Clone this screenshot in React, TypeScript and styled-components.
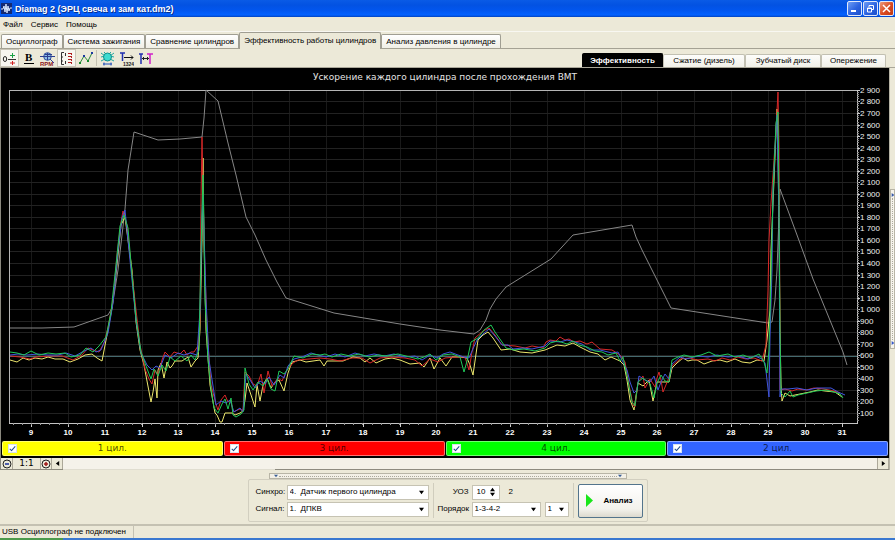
import React, { useState } from "react";
import styled, { createGlobalStyle, css } from "styled-components";

const ui = '"Liberation Sans", Arial, sans-serif';
const wide = '"DejaVu Sans", Verdana, sans-serif';
const face = "#ece9d8";

const GlobalStyle = createGlobalStyle`
  *, *::before, *::after { box-sizing: border-box; }
  body { margin: 0; background: ${face}; font: 8px/12px ${ui}; color: #000; }
  button, input, select { font: inherit; color: inherit; margin: 0; padding: 0; border-radius: 0; }
  svg { display: block; }
`;

const Window = styled.div`
  display: flex;
  flex-direction: column;
  min-height: 100vh;
  background: ${face};
`;

const TitleBar = styled.header`
  display: flex;
  align-items: center;
  gap: 3px;
  height: 17px;
  padding: 0 1px;
  background: linear-gradient(#0a5be6 0%, #0352e2 30%, #0256ee 60%, #0462ff 88%, #0243c0 100%);
`;

const Title = styled.h1`
  flex: 1;
  margin: 0;
  color: #fff;
  font: bold 9px/16px "Liberation Sans", Arial, sans-serif;
  text-shadow: 1px 1px 0 #0a2f8c;
`;

const CaptionButton = styled.button<{ $close?: boolean }>`
  display: grid;
  place-items: center;
  width: 15px;
  height: 15px;
  margin-left: -2px;
  border: 1px solid #dfe8fb;
  border-radius: 2px;
  background: ${(p) => (p.$close ? "linear-gradient(135deg,#ec9a7c,#d9481f 55%,#bf3a14)" : "linear-gradient(135deg,#6d9df5,#2b62e0 55%,#1c4fcb)")};
`;

const CaptionButtons = styled.div`
  display: flex;
  gap: 3px;
`;

const MenuBar = styled.nav`
  display: flex;
  gap: 8px;
  height: 15px;
  padding: 1px 3px 0;
  border-bottom: 1px solid #f8f7f1;
`;

const MenuItem = styled.button`
  border: 0;
  background: none;
  line-height: 13px;
`;

const TabRow = styled.div`
  display: flex;
  align-items: flex-end;
  height: 17px;
  padding-left: 1px;
  border-bottom: 1px solid #a5a294;
`;

const Tab = styled.button<{ $active?: boolean }>`
  height: 14px;
  padding: 0 4px;
  border: 1px solid #a09e92;
  border-bottom: 0;
  border-radius: 2px 2px 0 0;
  background: linear-gradient(#fff, #f0efe6);
  line-height: 13px;
  white-space: nowrap;
  ${(p) =>
    p.$active &&
    css`
      height: 17px;
      margin-bottom: -1px;
      padding-bottom: 1px;
      background: ${face};
    `}
`;

const Toolbar = styled.div`
  display: flex;
  align-items: stretch;
  height: 19px;
  border-bottom: 1px solid #aaa799;
`;

const ToolButton = styled.button<{ $pressed?: boolean }>`
  display: grid;
  place-items: center;
  width: 19px;
  border: 1px solid ${(p) => (p.$pressed ? "#c9c6b8" : "transparent")};
  background: ${(p) => (p.$pressed ? "#f7f6f0" : "none")};
`;

const Divider = styled.span`
  width: 1px;
  margin: 1px;
  background: #c5c2b2;
`;

const SubTabs = styled.div`
  display: flex;
  align-items: flex-end;
  margin-left: auto;
  padding-right: 9px;
`;

const SubTab = styled.button<{ $active?: boolean; $width: number }>`
  width: ${(p) => p.$width}px;
  height: ${(p) => (p.$active ? 14 : 13)}px;
  border: 1px solid ${(p) => (p.$active ? "#000" : "#c2c0b2")};
  border-bottom: 0;
  border-radius: 2px 2px 0 0;
  background: ${(p) => (p.$active ? "#000" : "linear-gradient(#fdfdfb,#f1f0e8)")};
  color: ${(p) => (p.$active ? "#fff" : "#000")};
  font-weight: ${(p) => (p.$active ? "bold" : "normal")};
  line-height: 12px;
  white-space: nowrap;
`;

const Workspace = styled.main`
  display: flex;
  border-left: 1px solid #8a887e;
`;

const ChartColumn = styled.section`
  flex: 1;
  min-width: 0;
  background: #000;
`;

const ChartTitle = styled.h2`
  margin: 0;
  padding-top: 3px;
  height: 18px;
  color: #e4e4e4;
  font: 9px/12px ${wide};
  text-align: center;
`;

const Plot = styled.svg`
  width: 100%;
  height: auto;
`;

const Legend = styled.div`
  display: grid;
  grid-template-columns: repeat(4, 1fr);
  gap: 1px;
  padding: 1px 1px 2px;
`;

const LegendItem = styled.label<{ $color: string }>`
  display: flex;
  align-items: center;
  height: 15px;
  padding: 0 14px 0 5px;
  border: 1px solid #ffffff70;
  border-radius: 2px;
  background: ${(p) => p.$color};
  color: #000000b8;
  font: 9px/13px ${wide};
`;

const LegendText = styled.span`
  flex: 1;
  text-align: center;
`;

const Check = styled.input`
  display: grid;
  place-items: center;
  width: 9px;
  height: 9px;
  appearance: none;
  border: 1px solid #d7e2ee;
  background: #fff;
  &:checked::before {
    content: "";
    width: 3px;
    height: 6px;
    margin-top: -2px;
    border: solid #1c4a8c;
    border-width: 0 1px 1px 0;
    transform: rotate(42deg);
  }
`;

const ScrollRow = styled.div`
  display: flex;
  height: 12px;
  background: #f4f1e8;
  border-bottom: 1px solid #8e8b7f;
`;

const ScrollButton = styled.button<{ $width: number }>`
  display: grid;
  place-items: center;
  width: ${(p) => p.$width}px;
  border: 0;
  border-right: 1px solid #aca899;
  background: ${face};
  font: 9px/11px ${wide};
`;

const Track = styled.div`
  flex: 1;
  border-right: 1px solid #aca899;
`;

const Thumb = styled.div`
  width: 26%;
  height: 12px;
  background: #f5f2ea;
  border-bottom: 1px solid #e0ddd0;
`;

const SideStrip = styled.aside`
  display: flex;
  align-items: center;
  width: 6px;
  border-left: 1px solid #b5b2a4;
`;

const SideHandle = styled.button`
  display: flex;
  flex-direction: column;
  justify-content: space-between;
  align-items: center;
  width: 5px;
  height: 40%;
  padding: 3px 0;
  border: 1px solid #b8b5a6;
  background: #f6f4ec;
`;

const BottomSplit = styled.button`
  display: flex;
  align-items: center;
  justify-content: space-between;
  align-self: center;
  width: 40%;
  height: 6px;
  margin-top: 3px;
  padding: 0 4px;
  border: 1px solid #b8b5a6;
  background: #f3f0e6;
`;

const Dots = styled.span<{ $vertical?: boolean }>`
  flex: 1;
  margin: 1px;
  ${(p) => (p.$vertical ? "border-left" : "border-top")}: 1px dotted #aaa89c;
`;

const Controls = styled.form`
  display: flex;
  align-self: center;
  align-items: center;
  height: 43px;
  padding: 0 4px 0 7px;
  border: 1px solid #d2cfc0;
  border-radius: 2px;
`;

const FieldGrid = styled.div<{ $second?: boolean }>`
  display: grid;
  grid-template-columns: ${(p) => (p.$second ? "31px auto" : "28px 142px")};
  column-gap: 3px;
  row-gap: 2px;
  align-items: center;
`;

const FieldLabel = styled.label`
  text-align: right;
  white-space: nowrap;
`;

const FieldRow = styled.div`
  display: flex;
  align-items: center;
  gap: 4px;
`;

const Field = styled.div<{ $width?: number }>`
  display: flex;
  align-items: center;
  width: ${(p) => (p.$width ? `${p.$width}px` : "100%")};
  height: 15px;
  padding-right: 4px;
  border: 1px solid #c6c3b3;
  background: #fff;
`;

const Select = styled.select`
  flex: 1;
  min-width: 0;
  height: 13px;
  padding-left: 2px;
  appearance: none;
  border: 0;
  background: none;
`;

const NumberInput = styled.input`
  flex: 1;
  min-width: 0;
  padding-left: 4px;
  border: 0;
  background: none;
  appearance: textfield;
  &::-webkit-inner-spin-button { appearance: none; }
`;

const Separator = styled.span`
  width: 1px;
  height: 35px;
  margin: 0 4px;
  background: #d0cdbd;
`;

const Extra = styled.span`
  margin-left: 5px;
`;

const AnalyseButton = styled.button`
  display: flex;
  align-items: center;
  gap: 11px;
  width: 65px;
  height: 34px;
  padding-left: 7px;
  border: 1px solid #53748c;
  border-radius: 2px;
  background: linear-gradient(#fff, #f3f2ec 75%, #dcd9ce);
  font-weight: bold;
`;

const StatusBar = styled.footer`
  display: flex;
  align-items: center;
  flex: 1;
  min-height: 14px;
  margin-top: 2px;
  border-top: 2px solid #c4c1b2;
`;

const StatusCell = styled.span`
  min-width: 134px;
  padding: 0 2px;
  border-right: 1px solid #c4c1b2;
`;

const Desktop = styled.div`
  height: 2px;
  background: linear-gradient(90deg, #4c9a4c 0 7%, #3a78d0 7%);
`;

const Arrow = ({ up, left, right, color = "#000", size = 5 }: { up?: boolean; left?: boolean; right?: boolean; color?: string; size?: number }) => (
  <svg width={size} height={size} viewBox="0 0 6 6" aria-hidden="true">
    <path d={up ? "M0 5L3 1L6 5Z" : left ? "M5 0L1 3L5 6Z" : right ? "M1 0L5 3L1 6Z" : "M0 1L6 1L3 5Z"} fill={color} />
  </svg>
);

const AppIcon = () => (
  <svg width="11" height="11" viewBox="0 0 11 11" aria-hidden="true">
    <rect width="11" height="11" fill="#142a72" />
    <path d="M0 6H2L3 3L4 9L5 1L6 10L7 3L8 8L9 5H11" stroke="#d9e8ff" fill="none" />
  </svg>
);

const icons: Record<string, React.ReactNode> = {
  zero: (
    <>
      <ellipse cx="3" cy="8" rx="1.700" ry="2.500" stroke="#222" fill="none" />
      <path d="M6 8.500H14" stroke="#333" />
      <path d="M10.500 2V7M8 4.500H13" stroke="#19a045" />
      <path d="M10.500 10V14M8 12H13" stroke="#d02020" />
    </>
  ),
  bold: (
    <>
      <text x="4" y="10" fontFamily="Liberation Serif, serif" fontWeight="bold" fontSize="11" fill="#000">В</text>
      <path d="M3 12.500H13" stroke="#000" />
    </>
  ),
  rpm: (
    <>
      <circle cx="7.500" cy="5.500" r="3.800" fill="#8fc0e8" stroke="#30509c" />
      <path d="M0 5.500H15M5 3.500H12M7.500 2V9M10 8L14 12" stroke="#2c3f90" />
      <text x="0" y="14.500" fontFamily="Liberation Sans, sans-serif" fontWeight="bold" fontSize="6" fill="#8c1818">RPM</text>
    </>
  ),
  scale: (
    <>
      <path d="M5 1.500H2.500V13.500H5M2.500 6H4M2.500 10H4" stroke="#333" fill="none" />
      <path d="M6.500 2V5M6.500 10V13" stroke="#333" />
      <path d="M9 2.500H12M9 5.500H12M9 8.500H12M9 11.500H12" stroke="#b02020" />
      <path d="M12.500 2V13" stroke="#b02020" strokeDasharray="2 1" />
    </>
  ),
  graph: (
    <>
      <path d="M2 12L6 5L10 10L14 2" stroke="#2b8a3c" fill="none" />
      <path d="M1 11h2v2H1zM9 9h2v2H9z" fill="#158a2c" />
      <path d="M5 4h2v2H5zM13 1h2v2h-2z" fill="#1b3aa0" />
    </>
  ),
  bug: (
    <>
      <path d="M1 2L5 5L1 6M14 2L10 5L14 6M1 10L5 8M14 10L10 8M4 1L6 3M11 1L9 3" stroke="#22a8a0" fill="none" />
      <ellipse cx="7.500" cy="6" rx="4" ry="4" fill="#3edbd0" stroke="#12908c" />
      <path d="M3 13H12M4 11.500V14.500M11 11.500V14.500" stroke="#1d4cb8" />
    </>
  ),
  order: (
    <>
      <path d="M1 2H6M3.500 2V10" stroke="#2030b0" strokeWidth="1.500" />
      <path d="M5 6.500H14M12 4.500L14 6.500L12 8.500" stroke="#111" fill="none" />
      <text x="4" y="14.500" fontFamily="Liberation Sans, sans-serif" fontWeight="bold" fontSize="5" fill="#222">1324</text>
    </>
  ),
  range: (
    <>
      <path d="M1 3H5M3 3V13" stroke="#2230b0" strokeWidth="1.500" />
      <path d="M9 3H15M12 3V13" stroke="#d022c8" strokeWidth="1.500" />
      <path d="M4 7.500H11M5.500 6V9M9.500 6V9" stroke="#222" />
    </>
  ),
};

const Glyph = ({ name }: { name: string }) => (
  <svg width="15" height="15" viewBox="0 0 15 15" aria-hidden="true">{icons[name]}</svg>
);

const tools = [
  { name: "zero", label: "Ноль", pressed: true },
  { name: "bold", label: "Жирные линии" },
  { name: "rpm", label: "Обороты" },
  { name: "scale", label: "Шкала", pressed: true },
  { name: "graph", label: "График" },
];
const moreTools = [
  { name: "bug", label: "Диапазон" },
  { name: "order", label: "Порядок" },
  { name: "range", label: "Метки" },
];

const envelope =
  "10,328 42,328 74,327 108,315 112,308 118,270 125,209 128,170 134,132 146,136 158,140 180,139 202,137 204,118 206,90 218,101 228,143 236,175 246,217 255,235 266,260 277,282 286,298 334,313 400,324 440,330 474,334 480,330 486,320 490,309 496,299 506,287 551,259 573,235 632,225 636,237 642,250 671,308 768,323 772,322 775,300 777,270 780,189 797,235 813,279 827,313 843,352 847,365";

const traces = [
  {
    color: "#ece66c",
    points:
      "10,360 17,362 23,358 29,360 35,358 42,359 48,357 55,359 63,359 70,362 78,359 85,355 92,354 97,358 102,361 107,335 112,308 117,265 121,225 125,217 128,240 132,270 136,322 140,350 144,365 147,381 151,402 153,392 155,379 157,398 158,370 161,363 164,378 167,362 170,368 172,366 175,361 182,361 188,357 191,367 195,361 198,358 200,330 202,240 203,158 204,240 206,330 210,385 213,402 215,413 217,415 220,422 222,422 225,413 232,413 235,415 240,413 243,411 245,400 247,383 250,392 255,407 257,385 260,401 263,385 267,378 271,388 275,382 279,380 284,391 288,373 292,362 300,360 306,362 320,360 324,366 327,361 343,361 353,357 360,358 365,362 370,358 376,363 385,359 392,358 400,360 410,364 420,363 424,367 430,358 434,369 440,358 446,366 452,357 460,357 467,358 470,365 473,375 478,340 483,335 488,332 493,338 501,350 510,349 520,352 532,353 545,350 557,345 565,346 573,343 580,347 590,352 598,354 605,360 611,357 620,361 624,365 627,380 630,400 634,410 636,396 638,383 643,386 649,380 653,401 657,382 663,382 669,382 672,368 677,363 683,358 688,361 692,360 697,360 704,364 712,361 720,360 727,362 735,359 742,362 750,363 757,360 764,361 767,340 770,310 771,250 774,180 777,109 778,150 779,230 780,330 781,385 782,401 785,393 790,396 800,394 810,392 818,390 825,391 835,392 842,397",
  },
  {
    color: "#d82828",
    points:
      "10,356 20,357 30,359 36,357 50,356 62,356 73,360 82,355 88,348 93,350 99,352 104,343 108,328 113,300 117,255 121,222 123,211 127,225 131,265 136,310 140,345 145,369 149,379 152,384 155,370 158,375 162,360 165,352 170,357 174,352 180,354 184,350 187,355 191,352 194,352 198,346 200,320 201,200 202,137 204,240 207,330 211,385 216,404 218,410 221,400 225,395 228,402 231,400 233,412 240,409 243,411 245,372 249,376 253,384 257,386 261,374 264,393 268,371 272,386 278,378 282,381 287,370 293,363 298,360 320,358 330,359 340,361 352,358 362,358 370,363 380,358 390,357 405,358 415,360 422,366 430,359 438,362 445,358 455,357 465,357 469,370 472,352 475,338 483,331 489,328 495,335 502,345 515,346 525,348 532,346 543,348 546,342 550,340 556,341 560,337 565,340 569,339 574,342 580,341 587,344 592,342 600,349 612,350 620,355 625,362 629,385 633,405 635,407 638,382 643,376 645,388 650,379 655,387 657,378 659,372 661,380 663,392 668,380 672,366 680,359 690,358 697,360 708,359 715,361 722,358 730,360 738,357 746,359 754,358 762,361 766,345 768,290 769,240 771,203 773,175 776,130 778,92 779,146 780,330 780,390 785,389 792,391 798,389 806,390 814,388 824,389 834,391 840,393",
  },
  {
    color: "#4055dd",
    points:
      "10,355 18,354 27,355 38,354 48,355 58,355 66,353 75,356 84,351 91,348 96,352 101,350 108,333 113,303 118,250 122,218 125,210 128,240 132,280 136,320 141,353 147,365 152,370 156,366 160,368 165,355 171,358 178,353 184,355 190,353 197,355 200,310 202,218 203,195 206,300 209,360 213,386 216,405 221,401 226,403 230,400 234,412 240,408 243,412 246,374 250,380 255,388 260,381 265,384 269,377 274,385 280,375 284,378 288,366 294,359 302,357 311,353 318,355 326,357 335,354 345,357 355,353 365,356 374,354 384,356 394,354 405,357 415,356 422,360 430,355 437,358 443,354 450,352 458,355 464,357 469,358 472,351 477,340 483,334 489,329 495,336 502,345 508,345 513,349 523,348 532,349 545,346 550,341 560,342 567,340 575,342 582,344 590,350 600,350 612,353 618,352 622,360 627,370 630,382 634,393 637,390 639,376 645,380 650,382 654,376 658,390 661,382 665,374 669,379 672,364 680,357 686,359 698,356 708,357 717,355 728,357 738,356 748,359 755,356 762,359 765,363 769,397 770,337 772,270 773,190 776,130 777,115 779,220 780,397 781,389 788,389 797,388 807,390 817,388 831,388 838,392 845,395",
  },
  {
    color: "#20c858",
    points:
      "10,352 17,353 24,355 31,351 39,355 48,353 56,354 65,353 71,357 80,355 86,348 93,352 99,346 106,337 111,312 116,265 120,226 124,215 128,228 132,275 136,318 141,352 146,366 151,379 154,369 158,376 162,365 166,371 170,357 175,361 181,356 187,361 191,355 195,360 199,350 201,250 203,175 205,300 208,360 211,388 214,408 218,413 222,404 225,399 228,409 231,398 233,415 236,417 241,414 244,410 245,368 249,384 253,390 258,382 263,386 267,379 271,389 275,391 279,371 284,374 288,369 294,356 303,358 312,354 320,355 325,354 332,357 341,354 350,356 359,354 369,357 378,355 387,356 398,354 410,357 418,359 424,357 430,354 436,360 443,355 452,354 460,357 464,372 467,361 471,342 478,338 484,330 491,325 495,332 502,342 506,348 514,350 524,349 535,351 545,348 550,343 558,341 567,344 573,341 579,345 587,347 595,351 602,352 608,355 616,353 620,361 623,357 628,381 632,402 635,406 638,382 643,378 650,384 654,398 657,383 661,375 665,381 669,382 672,360 678,357 684,355 692,357 701,355 709,352 717,356 728,354 735,357 743,355 751,358 759,354 764,362 767,373 769,350 771,277 773,193 776,123 778,112 779,200 780,330 781,393 785,397 790,391 793,397 798,395 807,393 816,391 826,390 834,392 840,394 843,398",
  },
];

const xAt = (n: number) => Math.round(31 + (n - 9) * 36.85);
const yAt = (v: number) => Math.round(413 - ((v - 100) / 100) * 11.54);
const xTicks = Array.from({ length: 23 }, (_, i) => i + 9);
const yTicks = Array.from({ length: 29 }, (_, i) => (i + 1) * 100);
const minorX = Array.from({ length: 90 }, (_, i) => 13 + i * 9.21).filter((x) => x < 855);
const minorY = Array.from({ length: 143 }, (_, i) => 92 + i * 2.31).filter((y) => y < 422);
const axisLabel = (v: number) => (v < 1000 ? String(v) : `${Math.floor(v / 1000)} ${String(v % 1000).padStart(3, "0")}`);

const Chart = ({ visible }: { visible: boolean[] }) => (
  <Plot viewBox="1 86 888 354" role="img" aria-label="Ускорение каждого цилиндра">
    <g shapeRendering="crispEdges" strokeWidth="1" fill="none">
      {xTicks.map((n) => <path key={n} d={`M${xAt(n)}.5 91V423`} stroke="#191919" />)}
      {yTicks.map((v) => <path key={v} d={`M10 ${yAt(v)}.5H857`} stroke="#222" />)}
      <path d="M9.500 423V90.500H857" stroke="#b4b4b4" />
      <path d="M9 423.500H857.500V90" stroke="#c4c4c4" />
      {xTicks.map((n) => <path key={n} d={`M${xAt(n)}.5 423v4`} stroke="#ccc" />)}
      {yTicks.map((v) => <path key={v} d={`M857 ${yAt(v)}.5h3`} stroke="#ccc" />)}
      {minorX.map((x) => <path key={x} d={`M${x} 423v2`} stroke="#999" />)}
      {minorY.map((y) => <path key={y} d={`M857 ${y}h2`} stroke="#888" />)}
      <path d="M10 356H857" stroke="#456a6e" strokeWidth="1" />
    </g>
    <polyline points={envelope} fill="none" stroke="#868686" strokeWidth="1" />
    {traces.map((t, i) => visible[i] && <polyline key={t.color} points={t.points} fill="none" stroke={t.color} strokeWidth="1" />)}
    <g fill="#fff" fontFamily="Liberation Sans, Arial, sans-serif" fontSize="8">
      {xTicks.map((n) => <text key={n} x={xAt(n)} y="435" textAnchor="middle" fontWeight="bold">{n}</text>)}
      {yTicks.map((v) => <text key={v} x="860" y={yAt(v) + 3} fill="#f0f0f0">{axisLabel(v)}</text>)}
    </g>
  </Plot>
);

const cylinders = [
  { label: "1 цил.", color: "#ffff00", trace: 0 },
  { label: "3 цил.", color: "#ff0000", trace: 1 },
  { label: "4 цил.", color: "#00ff00", trace: 3 },
  { label: "2 цил.", color: "#3264ff", trace: 2 },
];

const tabs = ["Осциллограф", "Система зажигания", "Сравнение цилиндров", "Эффективность работы цилиндров", "Анализ давления в цилиндре"];
const subTabs = [
  { label: "Эффективность", width: 81 },
  { label: "Сжатие (дизель)", width: 82 },
  { label: "Зубчатый диск", width: 76 },
  { label: "Опережение", width: 65 },
];

export default function App() {
  const [tab, setTab] = useState(3);
  const [subTab, setSubTab] = useState(0);
  const [visible, setVisible] = useState([true, true, true, true]);

  return (
    <>
      <GlobalStyle />
      <Window>
        <TitleBar>
          <AppIcon />
          <Title>Diamag 2 (ЭРЦ свеча и зам кат.dm2)</Title>
          <CaptionButtons>
            <CaptionButton aria-label="Свернуть">
              <svg width="9" height="9"><path d="M1 7H6" stroke="#fff" strokeWidth="2" /></svg>
            </CaptionButton>
            <CaptionButton aria-label="Восстановить">
              <svg width="9" height="9" fill="none" stroke="#fff"><path d="M3 3V1.500H7.500V5.500H6M1.500 4H5.500V8H1.500ZM1 4.500H6" /></svg>
            </CaptionButton>
            <CaptionButton $close aria-label="Закрыть">
              <svg width="9" height="9"><path d="M1 1L8 8M8 1L1 8" stroke="#fff" strokeWidth="1.500" /></svg>
            </CaptionButton>
          </CaptionButtons>
        </TitleBar>
        <MenuBar>
          {["Файл", "Сервис", "Помощь"].map((m) => <MenuItem key={m}>{m}</MenuItem>)}
        </MenuBar>
        <TabRow role="tablist">
          {tabs.map((t, i) => (
            <Tab key={t} role="tab" aria-selected={i === tab} $active={i === tab} onClick={() => setTab(i)}>{t}</Tab>
          ))}
        </TabRow>
        <Toolbar>
          {tools.map((t) => <ToolButton key={t.name} aria-label={t.label} $pressed={t.pressed}><Glyph name={t.name} /></ToolButton>)}
          <Divider />
          {moreTools.map((t) => <ToolButton key={t.name} aria-label={t.label}><Glyph name={t.name} /></ToolButton>)}
          <SubTabs role="tablist">
            {subTabs.map((t, i) => (
              <SubTab key={t.label} role="tab" aria-selected={i === subTab} $active={i === subTab} $width={t.width} onClick={() => setSubTab(i)}>{t.label}</SubTab>
            ))}
          </SubTabs>
        </Toolbar>
        <Workspace>
          <ChartColumn>
            <ChartTitle>Ускорение каждого цилиндра после прохождения ВМТ</ChartTitle>
            <Chart visible={visible} />
            <Legend>
              {cylinders.map((c) => (
                <LegendItem key={c.label} $color={c.color}>
                  <Check type="checkbox" checked={visible[c.trace]} onChange={() => setVisible(visible.map((v, i) => (i === c.trace ? !v : v)))} />
                  <LegendText>{c.label}</LegendText>
                </LegendItem>
              ))}
            </Legend>
            <ScrollRow>
              <ScrollButton $width={12} aria-label="Уменьшить">
                <svg width="10" height="10" fill="none"><circle cx="5" cy="5" r="4" stroke="#222" /><path d="M3 5H7" stroke="#1a2f9c" strokeWidth="1.500" /></svg>
              </ScrollButton>
              <ScrollButton $width={28}>1:1</ScrollButton>
              <ScrollButton $width={11} aria-label="Увеличить">
                <svg width="10" height="10" fill="none"><circle cx="5" cy="5" r="4" stroke="#222" /><path d="M3 5H7M5 3V7" stroke="#a01818" strokeWidth="1.500" /></svg>
              </ScrollButton>
              <ScrollButton $width={11} aria-label="Влево"><Arrow left /></ScrollButton>
              <Track><Thumb /></Track>
              <ScrollButton $width={11} aria-label="Вправо"><Arrow right /></ScrollButton>
            </ScrollRow>
          </ChartColumn>
          <SideStrip>
            <SideHandle aria-label="Боковая панель">
              <Arrow right color="#3558a8" size={4} />
              <Dots $vertical />
              <Arrow right color="#3558c8" size={4} />
            </SideHandle>
          </SideStrip>
        </Workspace>
        <BottomSplit aria-label="Нижняя панель">
          <Arrow color="#3a5f96" size={4} />
          <Dots />
          <Arrow color="#3a5f96" size={4} />
        </BottomSplit>
        <Controls onSubmit={(e) => e.preventDefault()}>
          <FieldGrid>
            <FieldLabel htmlFor="sync">Синхро:</FieldLabel>
            <Field><Select id="sync"><option>4.&nbsp; Датчик первого цилиндра</option></Select><Arrow /></Field>
            <FieldLabel htmlFor="signal">Сигнал:</FieldLabel>
            <Field><Select id="signal"><option>1.&nbsp; ДПКВ</option></Select><Arrow /></Field>
          </FieldGrid>
          <Separator />
          <FieldGrid $second>
            <FieldLabel htmlFor="advance">УОЗ</FieldLabel>
            <FieldRow>
              <Field $width={28}>
                <NumberInput id="advance" type="number" defaultValue={10} />
                <span><Arrow up /><Arrow /></span>
              </Field>
              <Extra>2</Extra>
            </FieldRow>
            <FieldLabel htmlFor="order">Порядок</FieldLabel>
            <FieldRow>
              <Field $width={69}><Select id="order"><option>1-3-4-2</option></Select><Arrow /></Field>
              <Field $width={24}><Select aria-label="Цилиндр"><option>1</option></Select><Arrow /></Field>
            </FieldRow>
          </FieldGrid>
          <Separator />
          <AnalyseButton type="submit">
            <svg width="7" height="13" aria-hidden="true"><path d="M0 0L7 6.500L0 13Z" fill="#19e619" /></svg>
            Анализ
          </AnalyseButton>
        </Controls>
        <StatusBar><StatusCell>USB Осциллограф не подключен</StatusCell></StatusBar>
        <Desktop />
      </Window>
    </>
  );
}
